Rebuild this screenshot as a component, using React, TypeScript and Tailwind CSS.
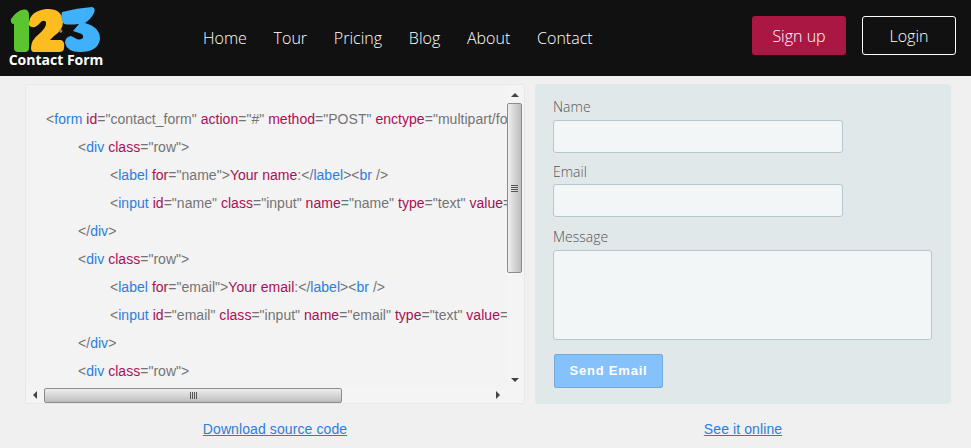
const navItems = ["Home", "Tour", "Pricing", "Blog", "About", "Contact"];

type Part = { text: string; color: "gray" | "blue" | "red" };

const g = (text: string): Part => ({ text, color: "gray" });
const b = (text: string): Part => ({ text, color: "blue" });
const r = (text: string): Part => ({ text, color: "red" });

const colors = {
  gray: "text-[#737373]",
  blue: "text-[#2b7de0]",
  red: "text-[#a80f55]",
};

const codeLines: { indent: string; parts: Part[] }[] = [
  {
    indent: "pl-[20px]",
    parts: [
      g("<"), b("form"), g(" "), r("id"), g('="contact_form" '), r("action"), g('="#" '),
      r("method"), g('="POST" '), r("enctype"), g('="multipart/form-data">'),
    ],
  },
  { indent: "pl-[52px]", parts: [g("<"), b("div"), g(" "), r("class"), g('="row">')] },
  {
    indent: "pl-[84px]",
    parts: [
      g("<"), b("label"), g(" "), r("for"), g('="name">'), r("Your name"), g(":</"),
      b("label"), g("><"), b("br"), g(" />"),
    ],
  },
  {
    indent: "pl-[84px]",
    parts: [
      g("<"), b("input"), g(" "), r("id"), g('="name" '), r("class"), g('="input" '),
      r("name"), g('="name" '), r("type"), g('="text" '), r("value"), g('="" size="30" />'),
    ],
  },
  { indent: "pl-[52px]", parts: [g("</"), b("div"), g(">")] },
  { indent: "pl-[52px]", parts: [g("<"), b("div"), g(" "), r("class"), g('="row">')] },
  {
    indent: "pl-[84px]",
    parts: [
      g("<"), b("label"), g(" "), r("for"), g('="email">'), r("Your email"), g(":</"),
      b("label"), g("><"), b("br"), g(" />"),
    ],
  },
  {
    indent: "pl-[84px]",
    parts: [
      g("<"), b("input"), g(" "), r("id"), g('="email" '), r("class"), g('="input" '),
      r("name"), g('="email" '), r("type"), g('="text" '), r("value"), g('="" size="30" />'),
    ],
  },
  { indent: "pl-[52px]", parts: [g("</"), b("div"), g(">")] },
  { indent: "pl-[52px]", parts: [g("<"), b("div"), g(" "), r("class"), g('="row">')] },
];

function Logo() {
  return (
    <div className="flex w-[96px] flex-col items-center self-start pt-[7px]">
      <svg width="92" height="45" viewBox="0 0 92 45" className="self-start ml-[1px]">
        <path
          d="M2 12 Q8 3 15 2.5 Q20 2 20 8 L20 41 Q20 45 16 45 L9 45 Q5 45 5 41 L5 17 Q1 17 2 12 Z"
          fill="#5ac52e"
        />
        <path
          d="M20 16 Q21 4 37 2 Q53 1 54 15 Q54 23 45 29 L41 33 L52 33 Q56 34 55 41 Q55 45 50 45 L25 45 Q22 45 22 41 Q22 33 30 27 Q38 20 37 15 Q34 12 31 16 Q27 21 23 20 Q19 19 20 16 Z"
          fill="#fdbc1f"
        />
        <path
          d="M53 5 Q68 1 83 0 Q87 1 85 6 Q82 12 76 16 Q91 20 91 32 Q89 45 71 45 Q58 45 56 36 Q56 30 62 29 L66 31 Q70 34 74 31 Q75 27 70 26 L64 24 L70 17 Q60 18 55 17 Q51 12 53 5 Z"
          fill="#3fb1fb"
        />
        <circle cx="51.7" cy="24" r="1.7" fill="#a97a72" />
      </svg>
      <span className="font-['Open_Sans',sans-serif] text-[14px] leading-[16px] font-bold whitespace-nowrap text-white">
        Contact Form
      </span>
    </div>
  );
}

function Header() {
  return (
    <header className="flex h-[76px] items-center bg-[#111111] pr-[15px] pl-[8px] font-['Open_Sans',sans-serif]">
      <Logo />
      <nav className="ml-[99px] flex gap-[26.8px] text-[16px] font-light text-white">
        {navItems.map((item) => (
          <a key={item} href="#">
            {item}
          </a>
        ))}
      </nav>
      <div className="mt-[16px] ml-auto flex gap-[16px] self-start text-[16px] font-light text-white">
        <button className="h-[39px] w-[94px] rounded-[3px] bg-[#ab1743]">Sign up</button>
        <button className="h-[39px] w-[94px] rounded-[3px] border border-white">Login</button>
      </div>
    </header>
  );
}

function Arrow({ points }: { points: string }) {
  return (
    <svg width="16" height="16" viewBox="0 0 16 16" className="shrink-0">
      <polygon points={points} fill="#444444" />
    </svg>
  );
}

function VerticalScrollbar() {
  return (
    <div className="flex w-[17px] shrink-0 flex-col items-center bg-[#f4f4f4] pr-[2px]">
      <div className="h-[2px]" />
      <Arrow points="4,10 12,10 8,6" />
      <div className="flex h-[170px] w-[15px] items-center justify-center rounded-[2px] border border-[#8c8c8c] bg-gradient-to-r from-[#eeeeee] via-[#d6d6d6] to-[#bdbdbd]">
        <div className="flex w-[7px] flex-col gap-[1px]">
          <span className="h-[1px] bg-[#555555]" />
          <span className="h-[1px] bg-[#555555]" />
          <span className="h-[1px] bg-[#555555]" />
          <span className="h-[1px] bg-[#555555]" />
        </div>
      </div>
      <div className="grow" />
      <Arrow points="4,7 12,7 8,11" />
    </div>
  );
}

function HorizontalScrollbar() {
  return (
    <div className="flex h-[16px] shrink-0 items-center bg-[#f4f4f4] pr-[18px]">
      <div className="flex w-[18px] shrink-0 justify-center">
        <Arrow points="10,4 10,12 6,8" />
      </div>
      <div className="flex h-[15px] w-[298px] items-center justify-center gap-[1px] rounded-[2px] border border-[#8c8c8c] bg-gradient-to-b from-[#eeeeee] via-[#d6d6d6] to-[#bdbdbd]">
        <span className="h-[7px] w-[1px] bg-[#555555]" />
        <span className="h-[7px] w-[1px] bg-[#555555]" />
        <span className="h-[7px] w-[1px] bg-[#555555]" />
        <span className="h-[7px] w-[1px] bg-[#555555]" />
      </div>
      <div className="grow" />
      <Arrow points="6,4 6,12 10,8" />
    </div>
  );
}

function CodePanel() {
  return (
    <div className="flex h-[320px] w-[500px] shrink-0 flex-col overflow-hidden rounded-[2px] border border-[#e8e8e8] bg-[#f3f3f3]">
      <div className="flex min-h-0 grow">
        <div className="min-w-0 grow overflow-hidden pt-[20px] font-['Liberation_Sans',sans-serif] text-[14px] leading-[28px] tracking-[0.03px] whitespace-pre">
          {codeLines.map((line, i) => (
            <div key={i} className={line.indent}>
              {line.parts.map((part, j) => (
                <span key={j} className={colors[part.color]}>
                  {part.text}
                </span>
              ))}
            </div>
          ))}
        </div>
        <VerticalScrollbar />
      </div>
      <HorizontalScrollbar />
    </div>
  );
}

function FormPanel() {
  const labelClass = "block text-[14px] leading-[20px] font-light text-[#555555]";
  const fieldClass =
    "block rounded-[3px] border border-[#b5c8cd] bg-[#f2f6f7] outline-none";

  return (
    <form className="flex h-[320px] w-[416px] shrink-0 flex-col rounded-[4px] bg-[#e1e8ea] pt-[13px] pl-[18px] font-['Open_Sans',sans-serif]">
      <label className={labelClass}>Name</label>
      <input className={`${fieldClass} mt-[3px] h-[33px] w-[290px]`} />
      <label className={`${labelClass} mt-[9px]`}>Email</label>
      <input className={`${fieldClass} mt-[2px] h-[33px] w-[290px]`} />
      <label className={`${labelClass} mt-[10px]`}>Message</label>
      <textarea className={`${fieldClass} mt-[3px] h-[90px] w-[379px] resize-none`} />
      <button
        type="button"
        className="mt-[14px] ml-[1px] h-[34px] w-[109px] rounded-[2px] border border-[#74a9dc] bg-[#85c2fb] font-['Liberation_Sans',sans-serif] text-[13px] font-bold tracking-[0.8px] text-white"
      >
        Send Email
      </button>
    </form>
  );
}

export default function App() {
  return (
    <div className="h-[448px] overflow-hidden bg-[#f0f0f0]">
      <Header />
      <main className="pt-[8px] pl-[25px]">
        <div className="flex gap-[10px]">
          <CodePanel />
          <FormPanel />
        </div>
        <div className="mt-[15px] flex font-['Liberation_Sans',sans-serif] text-[14px] leading-[20px] tracking-[0.1px] text-[#2b7de0]">
          <div className="w-[500px] text-center">
            <a href="#" className="underline">Download source code</a>
          </div>
          <div className="ml-[10px] w-[416px] text-center">
            <a href="#" className="underline">See it online</a>
          </div>
        </div>
      </main>
    </div>
  );
}
